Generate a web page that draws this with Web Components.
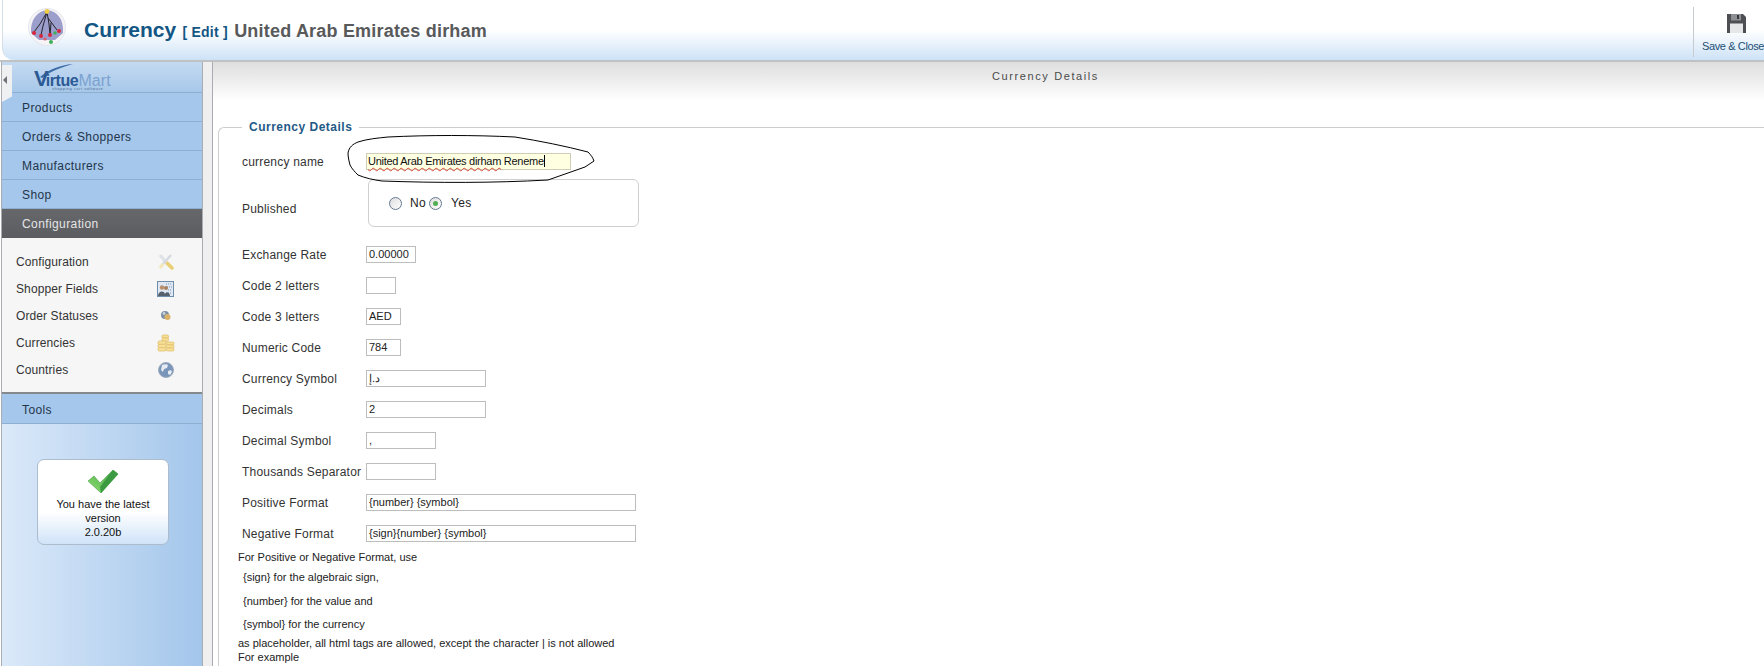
<!DOCTYPE html>
<html>
<head>
<meta charset="utf-8">
<title>Currency</title>
<style>
  html, body { margin: 0; height: 100%; overflow: hidden; background: #fff; }
  body { font: 12px "Liberation Sans", Arial, sans-serif; color: #222; }
</style>
</head>
<body>
<vm-app></vm-app>

<script>
const ICONS = {
  tools: `<svg width="18" height="18" viewBox="0 0 18 18"><path d="M3 2l5 6" stroke="#dfe2e6" stroke-width="3"/><path d="M10 10l5 5" stroke="#e9cf72" stroke-width="3.5" stroke-linecap="round"/><path d="M14 2L6 11" stroke="#d6dae0" stroke-width="2.5"/><path d="M6 11l-3 4" stroke="#f1e8bd" stroke-width="3.5"/></svg>`,
  fields: `<svg width="18" height="18" viewBox="0 0 18 18"><rect x=".5" y="1.5" width="16" height="15" fill="#dfe8f2" stroke="#6f8eac"/><path d="M9 4h6M10 7h5M11 10h4M11 13h4" stroke="#7f9ab8" stroke-dasharray="1 1"/><circle cx="5" cy="7.500" r="2.200" fill="#b98f6c"/><circle cx="9" cy="8" r="2" fill="#a97f5e"/><path d="M1 16c0-5 6-6 7-2 1-3 5-2 5 2z" fill="#57616d"/></svg>`,
  status: `<svg width="18" height="18" viewBox="0 0 18 18"><circle cx="8" cy="8" r="4" fill="#7f90a6"/><circle cx="10.500" cy="10" r="3" fill="#d9b268"/><circle cx="7" cy="6.500" r="1.400" fill="#c7d2df"/></svg>`,
  coins: `<svg width="18" height="18" viewBox="0 0 18 18" stroke="#dcbc64" stroke-width=".7" fill="#f7df97"><rect x="5" y="1" width="6.500" height="3.200" rx="1.200"/><rect x="5" y="4" width="6.500" height="3.200" rx="1.200"/><rect x="1" y="7" width="8" height="3.400" rx="1.200"/><rect x="1" y="10.300" width="8" height="3.400" rx="1.200"/><rect x="1" y="13.600" width="8" height="3.400" rx="1.200"/><rect x="9.500" y="8" width="7.500" height="3" rx="1.200"/><rect x="9.500" y="11" width="7.500" height="3" rx="1.200"/><rect x="9.500" y="14" width="7.500" height="3" rx="1.200"/></svg>`,
  globe: `<svg width="18" height="18" viewBox="0 0 18 18"><circle cx="9" cy="9" r="7.500" fill="#7a95ba" stroke="#a3aebb"/><path d="M5 4c2-1 5-1 6 0l-1 3-3 1-1 3-2-2zM11 10l3-1 1 2-2 3-2-1z" fill="#e6ebf1"/></svg>`,
};

class VmToolbar extends HTMLElement {
  constructor() {
    super();
    this.attachShadow({mode: 'open'});
    this.shadowRoot.innerHTML = `
      <style>
        :host {
          display: flex; align-items: center; height: 60px; box-sizing: border-box;
          margin-left: 2px; border-bottom-left-radius: 12px; border-left: 1px solid #d5dde5;
          background: linear-gradient(#fff 0, #fff 50%, #cde2f7 100%);
        }
        .logo { margin: -6px 0 0 24px; width: 40px; height: 42px; flex: none; }
        h1 { margin: 0 0 0 17px; font-weight: bold; font-size: 18px; color: #58595b; white-space: nowrap; letter-spacing: .2px; }
        b { font-size: 21px; color: #135684; letter-spacing: 0; }
        i { font-style: normal; font-size: 14px; color: #135684; margin: 0 1px; letter-spacing: .25px; }
        .save {
          margin-left: auto; width: 71px; height: 50px; margin-top: 4px; flex: none; overflow: hidden;
          border-left: 1px solid #c6cbd0; padding-left: 8px; box-sizing: border-box;
          display: flex; flex-direction: column; align-items: flex-start;
          font-size: 11px; color: #1d4f75; white-space: nowrap; letter-spacing: -.38px;
        }
        .save svg { margin: 6px 0 6px 24px; flex: none; }
      </style>
      <svg class="logo" viewBox="0 0 40 42">
        <circle cx="20" cy="21" r="18.500" fill="#f6f4f7" stroke="#e4e6ee"/>
        <path d="M4 27C3 13 11 5 20 4c10 1 17 9 16 23l-8 7H12z" fill="#9c9ecb"/>
        <path d="M20 6l-7 12-6 8M20 6l-4 14-2 9M20 6l2 12 1 10M21 12l9 12M24 17l-1 12" stroke="#25232d" stroke-width="1" fill="none"/>
        <circle cx="20" cy="5.500" r="2.400" fill="#f0cd45"/>
        <g fill="#d8263b"><circle cx="7" cy="27" r="2"/><circle cx="14" cy="30" r="2"/><circle cx="23" cy="29" r="2"/><circle cx="32" cy="25" r="2"/></g>
        <g fill="#3fb05a"><circle cx="28" cy="27" r="1.800"/><circle cx="24" cy="36" r="2"/></g>
        <g fill="#e45c6a"><circle cx="18" cy="33" r="1.600"/></g>
      </svg>
      <h1><b>Currency</b> <i>[ Edit ]</i> United Arab Emirates dirham</h1>
      <div class="save">
        <svg width="21" height="21" viewBox="0 0 21 21">
          <path d="M1 1h16l3 3v16H1z" fill="#4d4f53"/>
          <rect x="5" y="1" width="10" height="6.500" fill="#8d8f92"/>
          <rect x="11" y="2" width="2" height="4" fill="#36383b"/>
          <rect x="4" y="10.500" width="13" height="9.500" fill="#e6e7e8"/>
        </svg>
        <span>Save &amp; Close</span>
      </div>
    `;
  }
}

class VmSidebar extends HTMLElement {
  constructor() {
    super();
    this.attachShadow({mode: 'open'});
    this.shadowRoot.innerHTML = `
      <style>
        :host {
          display: flex; flex-direction: column; width: 200px; flex: none; margin-left: 1px;
          background: linear-gradient(90deg, #dbe9f9, #a3c6eb);
          position: relative; border-left: 1px solid #a9adb2;
        }
        .brand {
          height: 31px; box-sizing: border-box; background: linear-gradient(#c4daf1, #a7c8ea);
          border-bottom: 1px solid #8eafd0; position: relative; overflow: hidden;
        }
        .vm { position: absolute; left: 32px; top: 5px; white-space: nowrap; line-height: 24px; font-size: 16px; font-weight: bold; letter-spacing: -.4px; color: #2c5a94; }
        .vm big { font-size: 22px; font-weight: bold; letter-spacing: -3px; }
        .vm span { color: #7ca2cf; font-weight: normal; letter-spacing: .1px; }
        .swoosh { position: absolute; left: 36px; top: 0; }
        .tag { position: absolute; left: 50px; top: 24px; font-size: 4px; letter-spacing: .5px; color: #4f6f99; white-space: nowrap; }
        .collapse {
          position: absolute; left: 0; top: 3px; width: 10px; height: 37px; background: #eef0f2;
          clip-path: polygon(0 0, 100% 0, 100% 85%, 0 100%); z-index: 1;
        }
        .collapse::after {
          content: ""; position: absolute; left: 1px; top: 11px;
          border: 4px solid transparent; border-right: 4px solid #6e7378; border-left: 0;
        }
        .menu {
          height: 29px; box-sizing: border-box; padding-left: 20px; line-height: 30px; color: #23354a;
          background: #a5c7eb; border-bottom: 1px solid #8eafd0; letter-spacing: .4px; font-size: 12px;
        }
        .menu.on { background: linear-gradient(#66676a, #5c5d60); color: #e4e6e8; border-bottom: 0; }
        .sub {
          height: 156px; box-sizing: border-box; background: #f6f6f7; border-bottom: 2px solid #85898e;
          padding: 10px 0 0 14px; display: flex; flex-direction: column;
        }
        .sub a {
          height: 27px; display: flex; align-items: center; justify-content: space-between;
          padding-right: 27px; letter-spacing: .1px; color: #333; font-size: 12px;
        }
        .tools { height: 30px; line-height: 32px; }
        .update {
          margin: 35px 0 0 35px; width: 132px; height: 86px; box-sizing: border-box;
          border: 1px solid #adbccd; border-radius: 7px; text-align: center; line-height: 14px; color: #111;
          background: linear-gradient(#fff 0, #fff 62%, #cfe3f8 100%); padding: 9px 12px 0; font-size: 11px;
        }
        .update svg { display: block; margin: 0 auto 3px; }
      </style>
      <div class="collapse"></div>
      <div class="brand">
        <svg class="swoosh" width="40" height="16" viewBox="0 0 40 16"><path d="M2 15C10 8 22 3 35 2 24 5 13 9 4 16z" fill="#3c6ba6"/></svg>
        <span class="vm"><big>V</big>irtue<span>Mart</span></span>
        <span class="tag">shopping cart software</span>
      </div>
      <div class="menu">Products</div>
      <div class="menu">Orders &amp; Shoppers</div>
      <div class="menu">Manufacturers</div>
      <div class="menu">Shop</div>
      <div class="menu on">Configuration</div>
      <div class="sub">
        <a>Configuration ${ICONS.tools}</a>
        <a>Shopper Fields ${ICONS.fields}</a>
        <a>Order Statuses ${ICONS.status}</a>
        <a>Currencies ${ICONS.coins}</a>
        <a>Countries ${ICONS.globe}</a>
      </div>
      <div class="menu tools">Tools</div>
      <div class="update">
        <svg width="32" height="25" viewBox="0 0 32 25">
          <defs><linearGradient id="g" x1="0" y1="1" x2="1" y2="0"><stop offset="0" stop-color="#8fe070"/><stop offset="1" stop-color="#3f9f45"/></linearGradient></defs>
          <path d="M1 12l6-5 6 7L26 1l5 4-17 19z" fill="url(#g)" stroke="#4a9f4c" stroke-width=".6"/>
          <path d="M26 1l5 4-17 19-1-6z" fill="#3b9a42"/>
        </svg>
        You have the latest version<br>2.0.20b
      </div>
    `;
  }
}

class VmField extends HTMLElement {
  constructor() {
    super();
    this.attachShadow({mode: 'open'});
    const w = this.getAttribute('width') || 100;
    const value = this.getAttribute('value') || '';
    this.shadowRoot.innerHTML = `
      <style>
        :host { display: flex; align-items: center; height: 31px; }
        label { width: 124px; flex: none; letter-spacing: .2px; color: #333; white-space: nowrap; }
        div {
          width: ${w}px; height: 17px; box-sizing: border-box; border: 1px solid #bdbdbd;
          font-size: 11px; line-height: 15px; padding-left: 2px; color: #222; white-space: nowrap; overflow: hidden;
        }
      </style>
      <label><slot></slot></label><div dir="ltr">${value}</div>
    `;
  }
}

class VmForm extends HTMLElement {
  constructor() {
    super();
    this.attachShadow({mode: 'open'});
    this.shadowRoot.innerHTML = `
      <style>
        :host { display: block; position: relative; flex: 1; min-width: 0; overflow: hidden; border-left: 1px solid #a9adb2; }
        .bar {
          height: 49px; box-sizing: border-box; padding: 8px 0 0 114px; text-align: center; font-size: 11px;
          letter-spacing: 1.600px; color: #4b4b4b; background: linear-gradient(#dedede, #fff 80%);
        }
        fieldset {
          margin: 9px 0 0 5px; padding: 19px 0 0 23px; border: 1px solid #cdcdcd; border-right: 0; border-bottom: 0;
          border-top-left-radius: 6px; min-height: 560px; box-sizing: border-box;
        }
        legend { margin-left: 0; padding: 0 7px; font-weight: bold; color: #1f5a86; letter-spacing: .5px; font-size: 12px; }
        .name { display: flex; align-items: center; height: 17px; margin-bottom: 9px; }
        .name label, .pub label { width: 124px; flex: none; letter-spacing: .2px; color: #333; }
        .name div {
          width: 205px; height: 17px; box-sizing: border-box; border: 1px solid #cfcdb4; background: #ffffe2;
          font-size: 11px; line-height: 15px; padding-left: 1px; color: #111; white-space: nowrap; letter-spacing: -.28px;
        }
        .name u { text-decoration: underline wavy #d8443a 1px; text-underline-offset: 2px; }
        .name em { font-style: normal; border-right: 1px solid #000; }
        .pub { display: flex; height: 48px; margin-bottom: 12px; }
        .pub label { padding-top: 23px; }
        .box {
          margin-left: 2px; width: 271px; height: 48px; box-sizing: border-box; border: 1px solid #cfcfcf;
          border-radius: 6px; display: flex; align-items: center; padding: 0 0 0 20px; letter-spacing: .3px;
        }
        .radio { width: 13px; height: 13px; box-sizing: border-box; border: 1px solid #62788e; border-radius: 50%; background: linear-gradient(135deg, #ddd, #fff); position: relative; flex: none; }
        .radio.on::after { content: ""; position: absolute; left: 3px; top: 3px; width: 5px; height: 5px; border-radius: 50%; background: #4fae52; }
        .no { margin: 0 3px 0 8px; }
        .yes { margin-left: 9px; }
        .help { margin-left: -4px; margin-top: 1px; font-size: 11px; line-height: 14px; color: #222; }
        .help p { margin: 0; white-space: nowrap; }
        .help .sp { padding-left: 5px; height: 23.500px; line-height: 26px; }
        .help .after { margin-top: 1.500px; }
        .mark { position: absolute; left: 132px; top: 73px; pointer-events: none; }
      </style>
      <div class="bar">Currency Details</div>
      <fieldset>
        <legend>Currency Details</legend>
        <div class="name"><label>currency name</label><div><u>United Arab Emirates dirham</u> <em>Reneme</em></div></div>
        <div class="pub">
          <label>Published</label>
          <div class="box"><span class="radio"></span><span class="no">No</span><span class="radio on"></span><span class="yes">Yes</span></div>
        </div>
        <vm-field width="50" value="0.00000">Exchange Rate</vm-field>
        <vm-field width="30">Code 2 letters</vm-field>
        <vm-field width="35" value="AED">Code 3 letters</vm-field>
        <vm-field width="35" value="784">Numeric Code</vm-field>
        <vm-field width="120" value="د.إ">Currency Symbol</vm-field>
        <vm-field width="120" value="2">Decimals</vm-field>
        <vm-field width="70" value=",">Decimal Symbol</vm-field>
        <vm-field width="70">Thousands Separator</vm-field>
        <vm-field width="270" value="{number} {symbol}">Positive Format</vm-field>
        <vm-field width="270" value="{sign}{number} {symbol}">Negative Format</vm-field>
        <div class="help">
          <p>For Positive or Negative Format, use</p>
          <p class="sp">{sign} for the algebraic sign,</p>
          <p class="sp">{number} for the value and</p>
          <p class="sp">{symbol} for the currency</p>
          <p class="after">as placeholder, all html tags are allowed, except the character | is not allowed</p>
          <p>For example</p>
        </div>
      </fieldset>
      <svg class="mark" width="252" height="50" viewBox="0 0 252 50" fill="none" stroke="#000" stroke-width="1">
        <path d="M3 18C4 12 8 9 13 7c9-3 20-4 30-5 40-2 87-2 127 0 25 4 50 9 73 15 3 3 5 6 6 9l-9 6-37 13c-55 3-110 3-166 1-8-1-17-3-24-6-3-3-6-6-8-10-1-4-2-8-2-12z"/>
      </svg>
    `;
  }
}

class VmApp extends HTMLElement {
  constructor() {
    super();
    this.attachShadow({mode: 'open'});
    this.shadowRoot.innerHTML = `
      <style>
        :host { display: flex; flex-direction: column; height: 666px; overflow: hidden; }
        .top { border-bottom: 2px solid #bfc1c3; flex: none; }
        .main { display: flex; flex: 1; min-height: 0; }
        .rail { width: 9px; flex: none; background: #efefef; border-left: 1px solid #a9adb2; }
      </style>
      <div class="top"><vm-toolbar></vm-toolbar></div>
      <div class="main">
        <vm-sidebar></vm-sidebar>
        <div class="rail"></div>
        <vm-form></vm-form>
      </div>
    `;
  }
}

customElements.define('vm-toolbar', VmToolbar);
customElements.define('vm-sidebar', VmSidebar);
customElements.define('vm-field', VmField);
customElements.define('vm-form', VmForm);
customElements.define('vm-app', VmApp);
</script>
</body>
</html>
